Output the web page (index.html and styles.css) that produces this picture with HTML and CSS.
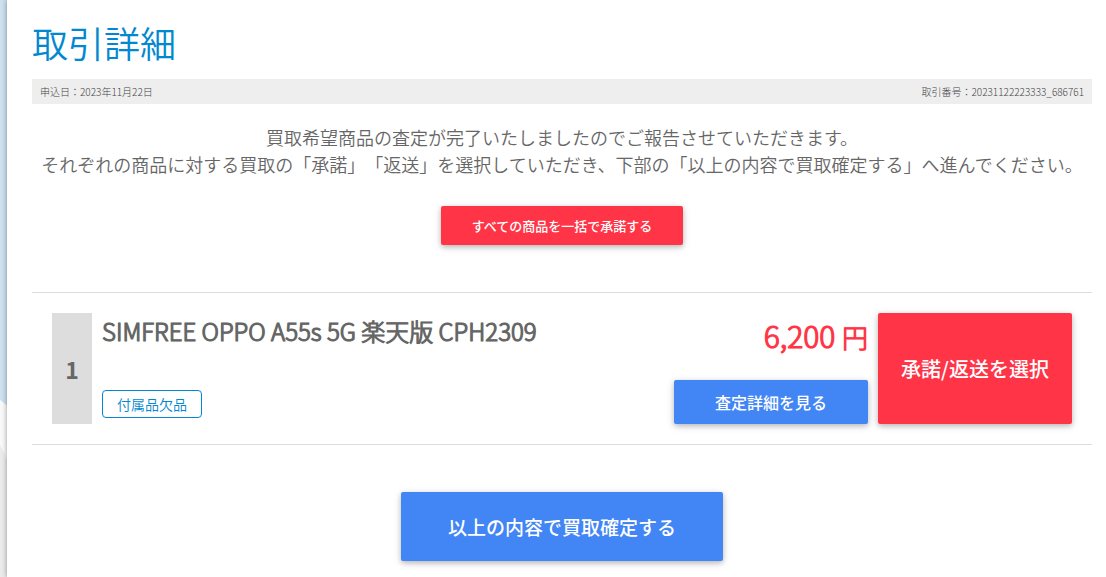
FILE: index.html
```html
<!DOCTYPE html>
<html lang="ja">
<head>
  <meta charset="UTF-8">
  <meta name="viewport" content="width=device-width, initial-scale=1.0">
  <title>取引詳細</title>
  <link rel="stylesheet" href="styles.css">
</head>
<body>

  <main class="page">
    <h1 class="page-title">取引詳細</h1>

    <div class="deal-info">
      <span>申込日：2023年11月22日</span>
      <span>取引番号：20231122223333_686761</span>
    </div>

    <p class="lead">買取希望商品の査定が完了いたしましたのでご報告させていただきます。<br>それぞれの商品に対する買取の「承諾」「返送」を選択していただき、下部の「以上の内容で買取確定する」へ進んでください。</p>

    <button type="button" class="btn btn-red btn-all">すべての商品を一括で承諾する</button>

    <section class="item">
      <div class="item-number">1</div>
      <div class="item-body">
        <h2 class="item-name">SIMFREE OPPO A55s 5G 楽天版 CPH2309</h2>
        <span class="item-tag">付属品欠品</span>
      </div>
      <div class="item-price">
        <p class="price">6,200 <span class="yen">円</span></p>
        <button type="button" class="btn btn-blue btn-detail">査定詳細を見る</button>
      </div>
      <button type="button" class="btn btn-red btn-choice">承諾/返送を選択</button>
    </section>

    <button type="button" class="btn btn-blue btn-confirm">以上の内容で買取確定する</button>
  </main>

</body>
</html>
```

FILE: styles.css
```css
* {
  box-sizing: border-box;
}
body {
  margin: 0;
  padding-left: 7px;
  min-height: 100vh;
  display: flex;
  font-family: "Noto Sans CJK JP", sans-serif;
  font-weight: 350;
  text-spacing-trim: space-all;
  color: #666;
  /* sky strip on the left, white cloud and grey ground at the bottom */
  background-color: #cce0ee;
  background-image:
    linear-gradient(65deg, #ebebeb 50%, transparent 51%),
    linear-gradient(#ebebeb, #ebebeb),
    linear-gradient(38deg, #f9f9f9 50%, transparent 55%),
    linear-gradient(#f9f9f9, #f9f9f9);
  background-repeat: no-repeat;
  background-size: 7px 15px, 7px 117px, 7px 6px, 7px 171px;
  background-position: 0 calc(100% - 117px), 0 100%, 0 calc(100% - 171px), 0 100%;
}
.page {
  flex: 1;
  display: flex;
  flex-direction: column;
  align-items: stretch;
  padding: 16px 14px 16px 25px;
  background: #fff;
  box-shadow: 0 0 5px rgba(0, 0, 0, 0.4);
}
.page-title {
  margin: 0 0 10px;
  font-size: 36px;
  line-height: 53px;
  font-weight: 350;
  color: #0288d1;
}
.deal-info {
  display: flex;
  justify-content: space-between;
  padding: 0 8px;
  font-size: 10px;
  line-height: 25px;
  font-weight: 300;
  color: #444;
  background: #eee;
}
.lead {
  margin: 20px 0 28px;
  font-size: 18px;
  line-height: 27px;
  text-align: center;
}

/* Buttons */
.btn {
  border: none;
  border-radius: 2px;
  padding: 0;
  font-family: inherit;
  font-weight: 500;
  color: #fff;
  cursor: pointer;
  box-shadow: 0 2px 5px rgba(0, 0, 0, 0.2), 0 2px 10px rgba(0, 0, 0, 0.12);
}
.btn-red {
  background: #ff3547;
}
.btn-blue {
  background: #4285f4;
}
.btn-all {
  align-self: center;
  width: 242px;
  height: 39px;
  font-size: 13px;
}
.btn-detail {
  height: 44px;
  font-size: 16px;
}
.btn-choice {
  width: 194px;
  font-size: 20px;
}
.btn-confirm {
  align-self: center;
  width: 322px;
  height: 69px;
  font-size: 19px;
}

/* Item row */
.item {
  display: flex;
  gap: 10px;
  margin: 47px 0;
  padding: 20px;
  border-top: 1px solid #ddd;
  border-bottom: 1px solid #ddd;
}
.item-name,
.price {
  font-weight: 300;
  -webkit-text-stroke: 1px currentColor;
  text-shadow: 0 0 1px currentColor;
}
.item-number {
  display: flex;
  align-items: center;
  justify-content: center;
  width: 40px;
  font-size: 23px;
  font-weight: 700;
  background: #ddd;
}
.item-body {
  flex: 1;
  display: flex;
  flex-direction: column;
  justify-content: space-between;
  align-items: flex-start;
  padding-bottom: 6px;
}
.item-name {
  margin: 0;
  font-size: 24px;
  line-height: 36px;
}
.item-tag {
  padding: 0 14px;
  border: 1px solid #0288d1;
  border-radius: 4px;
  font-size: 14px;
  line-height: 26px;
  color: #0288d1;
}
.item-price {
  display: flex;
  flex-direction: column;
  justify-content: space-between;
  width: 194px;
  height: 111px;
}
.price {
  margin: 0;
  font-size: 30px;
  line-height: 44px;
  text-align: right;
  color: #ff3547;
}
.yen {
  font-size: 26px;
}
```
